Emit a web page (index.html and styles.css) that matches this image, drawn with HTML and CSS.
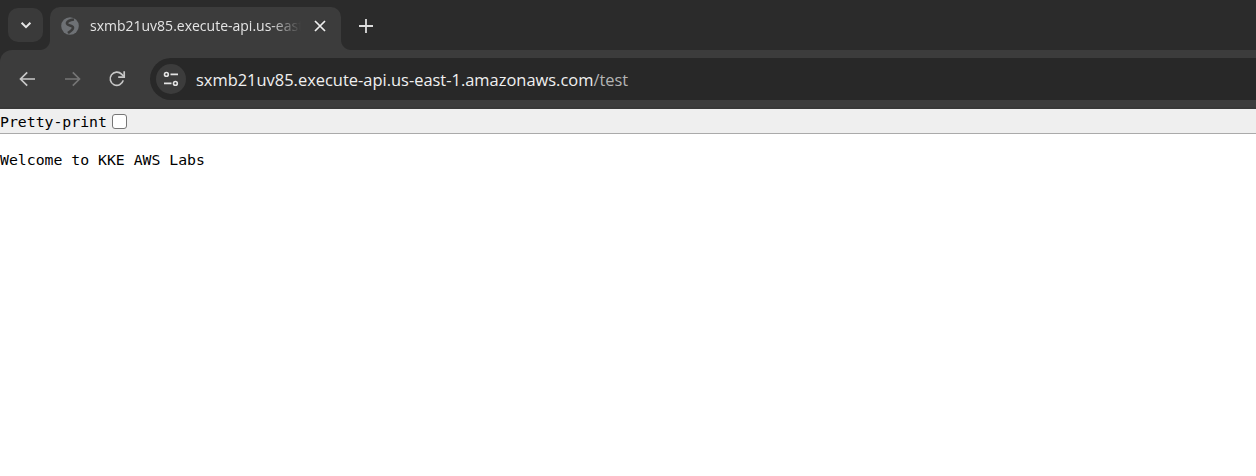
FILE: index.html
```html
<!DOCTYPE html>
<html lang="en">
<head>
<meta charset="utf-8">
<title>sxmb21uv85.execute-api.us-east-1.amazonaws.com/test</title>
<link rel="stylesheet" href="styles.css">
</head>
<body>
<header class="chrome">
  <div class="strip">
    <div class="tab-search">
      <svg width="16" height="16" viewBox="0 0 16 16"><path d="M3.600 5.800 8 10.200l4.400-4.400" fill="none" stroke="#e6e6e6" stroke-width="2"/></svg>
    </div>
    <div class="tab">
      <svg class="globe" width="18" height="18" viewBox="0 0 18 18"><circle cx="9" cy="9" r="8.800" fill="#6e7175"/><path d="M13 2.500C9 2.800 5.500 4.500 6 6.800 6.500 9 11.500 8 12 10.500 12.400 12.700 9.500 14 7 16" fill="none" stroke="#3c3c3c" stroke-width="2.600"/></svg>
      <span class="tab-title">sxmb21uv85.execute-api.us-east-1.amazonaws.com/test</span>
      <svg class="close" width="12" height="12" viewBox="0 0 12 12"><path d="M1 1l10 10M11 1 1 11" stroke="#efefef" stroke-width="1.700" fill="none"/></svg>
    </div>
    <svg class="new-tab" width="14" height="14" viewBox="0 0 14 14"><path d="M7 0v14M0 7h14" stroke="#dcdcdc" stroke-width="1.800" fill="none"/></svg>
  </div>
  <div class="toolbar">
    <svg class="nav" width="18" height="18" viewBox="0 0 18 18"><path d="M17 9H2.500M9.200 2.300 2.500 9l6.700 6.700" fill="none" stroke="#c7c7c7" stroke-width="1.700"/></svg>
    <svg class="nav" width="18" height="18" viewBox="0 0 18 18"><path d="M2 9h14.500M9.800 2.300 16.500 9l-6.700 6.700" fill="none" stroke="#757575" stroke-width="1.700"/></svg>
    <svg class="nav" width="18" height="18" viewBox="0 0 18 18"><path d="M15.200 10.400A6.600 6.600 0 1 1 13.600 4.200L15.800 6.400" fill="none" stroke="#c7c7c7" stroke-width="1.700"/><path d="M16.200 1.200v6h-6" fill="none" stroke="#c7c7c7" stroke-width="1.700"/></svg>
    <div class="omnibox">
      <div class="site-info">
        <svg width="16" height="16" viewBox="0 0 16 16"><g fill="none" stroke="#e3e3e3" stroke-width="1.600"><circle cx="3.400" cy="3.400" r="1.900"/><circle cx="12.400" cy="12.400" r="1.900"/><path d="M7.500 3.400h7.500M1 12.400h7.500"/></g></svg>
      </div>
      <div class="url">sxmb21uv85.execute-api.us-east-1.amazonaws.com<span class="url-path">/test</span></div>
    </div>
  </div>
</header>
<div class="pretty"><label class="pretty-label">Pretty-print<span class="check"></span></label></div>
<pre class="body-text">Welcome to KKE AWS Labs</pre>
</body>
</html>
```
FILE: styles.css
```css
html, body { margin: 0; padding: 0; background: #fff; height: 100%; overflow: hidden; }

.chrome { background: #2b2b2b; font-family: "Open Sans", "Noto Sans", sans-serif; }

.strip { height: 50px; display: flex; align-items: flex-start; box-sizing: border-box; padding: 8px 0 0 8px; position: relative; }

.tab-search { width: 35px; height: 34px; background: #3a3a3a; border-radius: 10px; display: flex; align-items: center; justify-content: center; flex: none; }

.tab { margin: -1px 0 0 7px; width: 291px; height: 43px; background: #3c3c3c; border-radius: 10px 10px 0 0; display: flex; align-items: center; box-sizing: border-box; padding: 0 15px 6px 11px; position: relative; flex: none; }
.tab::before, .tab::after { content: ""; position: absolute; bottom: 0; width: 10px; height: 10px; background: radial-gradient(circle at var(--cx) 0, #2b2b2b 9.500px, #3c3c3c 10.500px); }
.tab::before { left: -10px; --cx: 0; }
.tab::after { right: -10px; --cx: 100%; }

.globe { flex: none; margin-right: 11px; }
.tab-title { flex: 1; min-width: 0; overflow: hidden; white-space: nowrap; color: #e4e4e4; font-size: 14px; -webkit-mask-image: linear-gradient(to right, #000 180px, transparent 211px); mask-image: linear-gradient(to right, #000 180px, transparent 211px); }
.close { flex: none; margin-left: 8px; }
.new-tab { flex: none; margin: 11px 0 0 18px; }

.toolbar { height: 59px; background: #3c3c3c; box-sizing: border-box; padding: 8px 0 7px 0; display: flex; align-items: center; border-radius: 12px 0 0 0; border-bottom: 2px solid #383838; position: relative; }
.nav { flex: none; margin-left: 18px; margin-right: 9px; }
.omnibox { flex: 1; height: 42px; margin-left: 15px; background: #282828; border-radius: 21px 0 0 21px; display: flex; align-items: center; padding-left: 6px; }
.site-info { width: 30px; height: 30px; border-radius: 50%; background: #3c3c3c; display: flex; align-items: center; justify-content: center; flex: none; }
.url { margin-left: 10px; color: #f0f0f0; font-size: 16.460px; white-space: nowrap; }
.url-path { color: #b4b4b4; }

.pretty { height: 24px; background: #efefef; border-bottom: 1px solid #aaaaaa; display: flex; align-items: center; font-family: "DejaVu Sans Mono", monospace; font-size: 14.800px; color: #000; }
.pretty-label { display: flex; align-items: center; }
.check { width: 13px; height: 13px; margin-left: 5px; border: 1px solid #767676; border-radius: 3px; background: #fff; }

.body-text { margin: 16px 0 0; font-family: "DejaVu Sans Mono", monospace; font-size: 14.800px; line-height: 19px; color: #000; }
```
